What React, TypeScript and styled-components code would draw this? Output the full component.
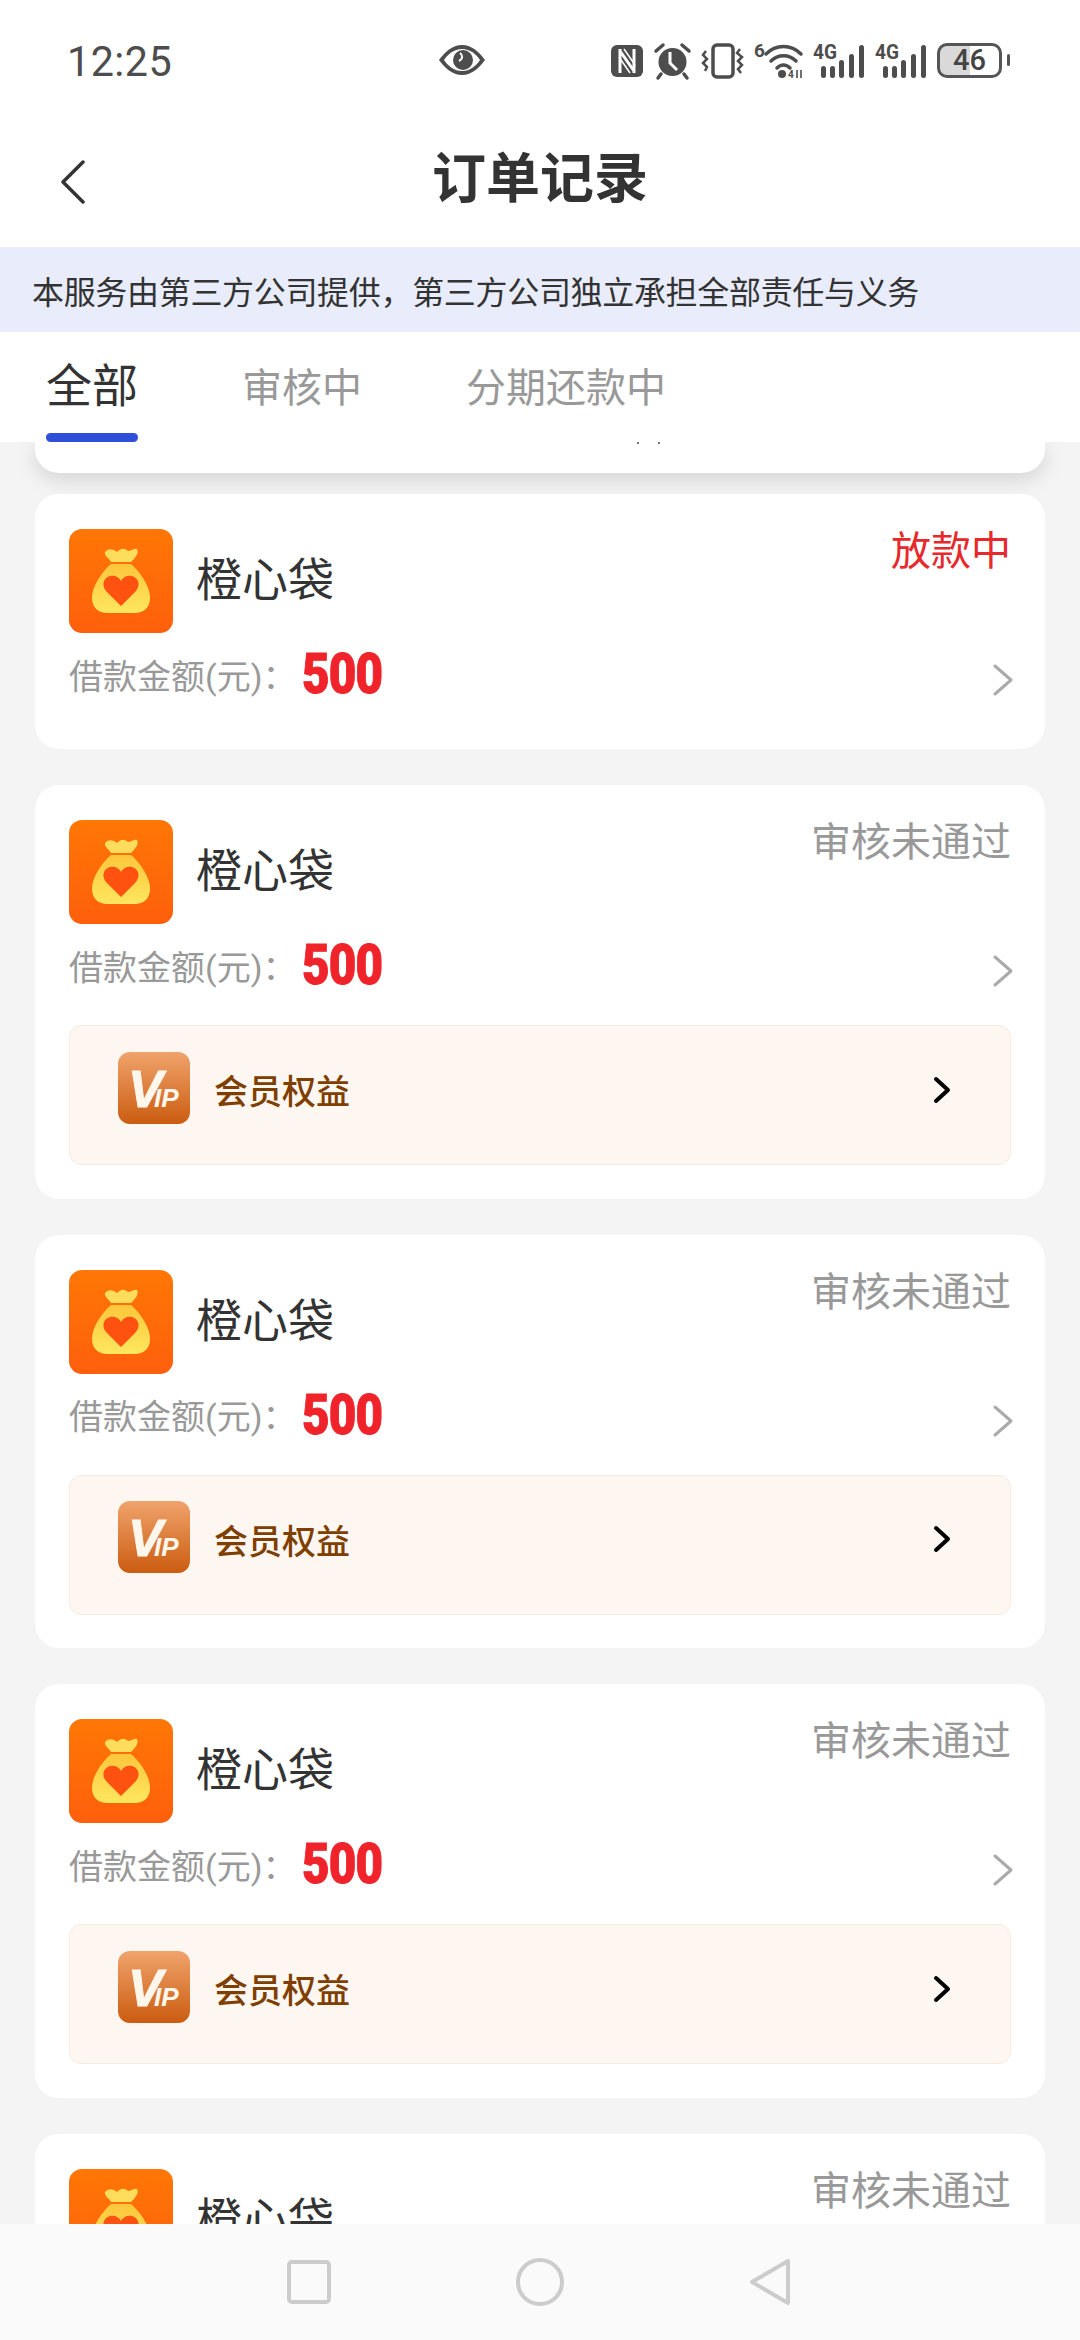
import React from "react";
import styled, { createGlobalStyle } from "styled-components";

const GlobalStyle = createGlobalStyle`
  html, body {
    margin: 0;
    padding: 0;
    background: #f4f4f4;
  }
  * {
    box-sizing: border-box;
  }
`;

const FONT = `Roboto, "Noto Sans CJK SC", sans-serif`;

const Page = styled.div`
  width: 1080px;
  height: 2340px;
  display: flex;
  flex-direction: column;
  overflow: hidden;
  background: #f4f4f4;
  font-family: ${FONT};
`;

/* status bar */
const StatusBar = styled.div`
  height: 120px;
  flex-shrink: 0;
  display: flex;
  align-items: flex-start;
  padding: 43px 0 0 67px;
  background: #fff;
  color: #4d4d4d;
`;

const Time = styled.div`
  width: 106px;
  font-size: 43px;
  line-height: 36px;
  letter-spacing: 0.5px;
  font-family: Roboto, sans-serif;
  transform: scaleX(0.96);
  transform-origin: left center;
`;

const EyeSlot = styled.div`
  margin-left: 266px;
  height: 34px;
  display: flex;
  align-items: center;
`;

const SysIcons = styled.div`
  margin-left: 126px;
  display: flex;
  align-items: flex-start;
`;

const SysIcon = styled.svg<{ $gap?: number }>`
  display: block;
  overflow: visible;
  margin-right: ${(p) => p.$gap ?? 10}px;
  flex-shrink: 0;
`;

const Battery = styled.div`
  position: relative;
  width: 65px;
  height: 35px;
  border: 3px solid #555;
  border-radius: 10px;
  overflow: hidden;
  display: flex;
  align-items: center;
  justify-content: center;
  font-family: Roboto, sans-serif;
  font-size: 29px;
  line-height: 29px;
  font-weight: 500;
  color: #444;
  background: linear-gradient(90deg, #d9d9d9 50%, #fff 50%);
`;

const BatteryNub = styled.div`
  width: 3px;
  height: 12px;
  margin: 11px 0 0 5px;
  background: #555;
  border-radius: 2px;
`;

/* header */
const Header = styled.div`
  height: 127px;
  flex-shrink: 0;
  position: relative;
  display: flex;
  align-items: center;
  justify-content: center;
  padding-bottom: 8px;
  background: #fff;
`;

const BackIcon = styled.svg`
  position: absolute;
  left: 60px;
  top: 40px;
`;

const Title = styled.h1`
  margin: 0;
  font-size: 54px;
  line-height: 60px;
  font-weight: 700;
  color: #333;
`;

const Notice = styled.div`
  height: 85px;
  flex-shrink: 0;
  display: flex;
  align-items: center;
  padding-left: 32px;
  background: #e9edfb;
  font-size: 32px;
  letter-spacing: -0.32px;
  color: #333;
`;

/* tabs */
const Tabs = styled.div`
  height: 110px;
  flex-shrink: 0;
  display: flex;
  padding-left: 46px;
  background: #fff;
`;

const Tab = styled.div<{ $active?: boolean }>`
  position: relative;
  margin-right: 104px;
  padding-top: ${(p) => (p.$active ? 24 : 31)}px;
  font-size: ${(p) => (p.$active ? 46 : 40)}px;
  line-height: ${(p) => (p.$active ? 60 : 52)}px;
  color: ${(p) => (p.$active ? "#333" : "#999")};
  ${(p) =>
    p.$active &&
    `
    &::after {
      content: "";
      position: absolute;
      left: 0;
      right: 0;
      bottom: 0;
      height: 9px;
      border-radius: 5px;
      background: #2f4fdb;
    }
  `}
`;

/* order list */
const List = styled.div`
  flex: 1;
  min-height: 0;
  overflow: hidden;
  display: flex;
  flex-direction: column;
  padding: 0 35px;
`;

const ClippedCard = styled.div`
  height: 31px;
  flex-shrink: 0;
  display: flex;
  gap: 19px;
  padding-left: 602px;
  margin-bottom: 21px;
  background: #fff;
  border-radius: 0 0 24px 24px;
  box-shadow: 0 6px 22px rgba(0, 0, 0, 0.14);
`;

const TinyDot = styled.span`
  width: 2px;
  height: 2px;
  background: #777;
`;

const Card = styled.div<{ $hasVip?: boolean }>`
  position: relative;
  flex-shrink: 0;
  height: ${(p) => (p.$hasVip ? 413.5 : 255)}px;
  margin-bottom: 36px;
  padding: 35px 34px 0;
  background: #fff;
  border-radius: 24px;
`;

const CardHead = styled.div`
  display: flex;
  align-items: flex-start;
`;

const ProductName = styled.div`
  margin-left: 23px;
  font-size: 46px;
  line-height: 102px;
  color: #333;
`;

const Status = styled.div<{ $alert?: boolean }>`
  margin-left: auto;
  margin-top: 2px;
  font-size: 40px;
  line-height: 42px;
  color: ${(p) => (p.$alert ? "#e8282b" : "#999")};
`;

const AmountRow = styled.div`
  height: 60px;
  margin-top: 14px;
  display: flex;
  align-items: center;
`;

const AmountLabel = styled.span`
  position: relative;
  top: -3px;
  width: 233px;
  font-size: 34px;
  color: #999;
`;

const AmountValue = styled.span`
  position: relative;
  top: -3px;
  width: 80px;
  font-size: 56px;
  line-height: 60px;
  font-weight: 900;
  font-family: Roboto, sans-serif;
  letter-spacing: -1px;
  color: #f0232b;
  -webkit-text-stroke: 1px #f0232b;
  transform: scaleX(0.85);
  transform-origin: left center;
  white-space: nowrap;
`;

const RowArrow = styled.svg`
  margin-left: auto;
  margin-right: -3px;
  position: relative;
  top: 3px;
`;

const VipBox = styled.div`
  height: 140px;
  margin-top: 27px;
  display: flex;
  align-items: center;
  padding: 0 44px 15px 48px;
  background: #fdf6f1;
  border: 1px solid #f8ebe0;
  border-radius: 12px;
`;

const VipText = styled.span`
  margin-left: 24px;
  font-size: 34px;
  font-weight: 500;
  color: #7f3f00;
  position: relative;
  top: 2px;
`;

const VipArrow = styled.svg`
  margin-left: auto;
  margin-right: 15px;
  position: relative;
  top: 2px;
`;

/* nav bar */
const NavBar = styled.div`
  height: 116px;
  flex-shrink: 0;
  display: flex;
  justify-content: center;
  align-items: flex-start;
  padding: 32px 2px 0 0;
  gap: 185px;
  background: #fafafa;
`;

const NavIcon = styled.svg<{ $top?: number }>`
  display: block;
  margin-top: ${(p) => p.$top ?? 0}px;
`;

const svgFont = "Roboto, sans-serif";

const Eye = () => (
  <svg width="46" height="30" viewBox="0 0 46 30">
    <path d="M23 0C33 0 40 7 46 15C40 23 33 30 23 30C13 30 6 23 0 15C6 7 13 0 23 0Z" fill="#4d4d4d" />
    <path d="M23 4C31 4 37 9 41 15C37 21 31 26 23 26C15 26 9 21 5 15C9 9 15 4 23 4Z" fill="#fff" />
    <circle cx="24" cy="15" r="10" fill="#4d4d4d" />
    <path d="M21 8C24 10 24 14 20 16" stroke="#fff" strokeWidth="2" fill="none" />
  </svg>
);

const Nfc = () => (
  <SysIcon width="32" height="32" viewBox="0 0 32 32" style={{ marginTop: 2 }} $gap={11}>
    <rect width="32" height="32" rx="6" fill="#4d4d4d" />
    <path d="M9 4V28M23 4V28M9 6L23 26" stroke="#fff" strokeWidth="3" fill="none" />
    <path d="M13 4L24 20M8 12L19 28" stroke="#fff" strokeWidth="1.5" fill="none" />
  </SysIcon>
);

const Alarm = () => (
  <SysIcon width="37" height="36" viewBox="0 0 37 36" $gap={11}>
    <circle cx="18.5" cy="19" r="14" fill="#4d4d4d" />
    <path d="M16 9V20L23 27" stroke="#fff" strokeWidth="3" fill="none" />
    <path d="M2 8L9 2M35 8L28 2M7 31L4 35M30 31L33 35" stroke="#4d4d4d" strokeWidth="3.5" strokeLinecap="round" fill="none" />
  </SysIcon>
);

const Vibrate = () => (
  <SysIcon width="42" height="36" viewBox="0 0 42 36" $gap={10}>
    <rect x="11" y="2" width="20" height="32" rx="4" fill="none" stroke="#4d4d4d" strokeWidth="3.5" />
    <path d="M4 8L1 12L5 16L1 20L5 24L3 28" fill="none" stroke="#4d4d4d" strokeWidth="2.5" />
    <path d="M38 6L35 10L40 14L36 18L40 22L36 26L39 30" fill="none" stroke="#4d4d4d" strokeWidth="2.5" />
  </SysIcon>
);

const Wifi = () => (
  <SysIcon width="50" height="36" viewBox="0 0 50 36" $gap={9}>
    <text x="0" y="14" fontSize="19" fontWeight="700" fontFamily={svgFont} fill="#4d4d4d">6</text>
    <path d="M12 11C22 1 37 1 47 11" fill="none" stroke="#4d4d4d" strokeWidth="3.5" strokeLinecap="round" />
    <path d="M17 18C24 11 35 11 42 18" fill="none" stroke="#4d4d4d" strokeWidth="3.5" strokeLinecap="round" />
    <path d="M23 25C27 21 32 21 36 25" fill="none" stroke="#4d4d4d" strokeWidth="3.5" strokeLinecap="round" />
    <circle cx="28" cy="31" r="4" fill="#4d4d4d" />
    <text x="34" y="35" fontSize="10" fontWeight="700" fontFamily={svgFont} fill="#4d4d4d">4</text>
    <path d="M43 27V35M47 35V27" stroke="#4d4d4d" strokeWidth="1.6" />
  </SysIcon>
);

const Signal = ({ gap }: { gap: number }) => (
  <SysIcon width="50" height="36" viewBox="0 0 50 36" $gap={gap}>
    <text x="0" y="16" fontSize="21" fontWeight="700" fontFamily={svgFont} fill="#4d4d4d" textLength="24" lengthAdjust="spacingAndGlyphs">4G</text>
    {[
      [8, 12],
      [17, 12],
      [26, 18],
      [36, 24],
      [46, 33],
    ].map(([x, h]) => (
      <rect key={x} x={x} y={35 - h} width="5" height={h} rx="2.5" fill="#4d4d4d" />
    ))}
  </SysIcon>
);

const MoneyBag = () => (
  <svg width="104" height="104" viewBox="0 0 104 104" style={{ flexShrink: 0, display: "block" }}>
    <defs>
      <linearGradient id="bagBg" x1="0" y1="0" x2="0" y2="1">
        <stop offset="0" stopColor="#ff7705" />
        <stop offset="1" stopColor="#ff5f0c" />
      </linearGradient>
      <linearGradient id="bagBody" x1="0" y1="0" x2="0" y2="1">
        <stop offset="0" stopColor="#fdc63b" />
        <stop offset="1" stopColor="#ffe75f" />
      </linearGradient>
    </defs>
    <rect width="104" height="104" rx="13" fill="url(#bagBg)" />
    <path d="M36 23C40 19 44 20 48 23C53 18 56 20 59 22C63 22 65 19 68 20C70 24 67 28 62 33H42C40 29 35 27 36 23Z" fill="#ffdd5c" />
    <path d="M42 35H62C68 40 81 55 81 69C81 79 74 84 66 84H38C30 84 23 79 23 69C23 55 36 40 42 35Z" fill="url(#bagBody)" />
    <path d="M52 77L38 63C32 57 34 49 41 47C46 46 50 48 52 52C54 48 58 46 63 47C70 49 72 57 66 63Z" fill="#ff5210" />
  </svg>
);

const VipLogo = () => (
  <svg width="72" height="72" viewBox="0 0 72 72" style={{ flexShrink: 0, display: "block" }}>
    <defs>
      <linearGradient id="vipBg" x1="0" y1="0" x2="0" y2="1">
        <stop offset="0" stopColor="#f0a36c" />
        <stop offset="1" stopColor="#cb5c10" />
      </linearGradient>
    </defs>
    <rect width="72" height="72" rx="12" fill="url(#vipBg)" />
    <text x="10" y="55" fontSize="52" fontWeight="700" fontStyle="italic" fontFamily={'"Liberation Sans", sans-serif'} fill="#fff6ec" stroke="#fff6ec" strokeWidth="1">V</text>
    <text x="36" y="55" fontSize="26" fontWeight="700" fontStyle="italic" fontFamily={'"Liberation Sans", sans-serif'} fill="#fff6ec">IP</text>
  </svg>
);

const Order = ({ status, alert, vip }: { status: string; alert?: boolean; vip?: boolean }) => (
  <Card $hasVip={vip}>
    <CardHead>
      <MoneyBag />
      <ProductName>橙心袋</ProductName>
      <Status $alert={alert}>{status}</Status>
    </CardHead>
    <AmountRow>
      <AmountLabel>借款金额(元)：</AmountLabel>
      <AmountValue>500</AmountValue>
      <RowArrow width="22" height="34" viewBox="0 0 22 34">
        <path d="M3 3L19 17L3 31" fill="none" stroke="#aaa" strokeWidth="3" strokeLinecap="round" strokeLinejoin="round" />
      </RowArrow>
    </AmountRow>
    {vip && (
      <VipBox>
        <VipLogo />
        <VipText>会员权益</VipText>
        <VipArrow width="18" height="28" viewBox="0 0 18 28">
          <path d="M3 3L15 14L3 25" fill="none" stroke="#000" strokeWidth="4" strokeLinecap="round" strokeLinejoin="round" />
        </VipArrow>
      </VipBox>
    )}
  </Card>
);

const App: React.FC = () => {
  return (
    <Page>
      <GlobalStyle />
      <StatusBar>
        <Time>12:25</Time>
        <EyeSlot>
          <Eye />
        </EyeSlot>
        <SysIcons>
          <Nfc />
          <Alarm />
          <Vibrate />
          <Wifi />
          <Signal gap={12} />
          <Signal gap={12} />
          <Battery>46</Battery>
          <BatteryNub />
        </SysIcons>
      </StatusBar>
      <Header>
        <BackIcon width="26" height="44" viewBox="0 0 26 44">
          <path d="M23 2L3 22L23 42" fill="none" stroke="#333" strokeWidth="3.5" strokeLinecap="round" strokeLinejoin="round" />
        </BackIcon>
        <Title>订单记录</Title>
      </Header>
      <Notice>本服务由第三方公司提供，第三方公司独立承担全部责任与义务</Notice>
      <Tabs>
        <Tab $active>全部</Tab>
        <Tab>审核中</Tab>
        <Tab>分期还款中</Tab>
      </Tabs>
      <List>
        <ClippedCard>
          <TinyDot />
          <TinyDot />
        </ClippedCard>
        <Order status="放款中" alert />
        <Order status="审核未通过" vip />
        <Order status="审核未通过" vip />
        <Order status="审核未通过" vip />
        <Order status="审核未通过" vip />
      </List>
      <NavBar>
        <NavIcon width="44" height="44" viewBox="0 0 44 44" $top={4}>
          <rect x="2" y="2" width="40" height="40" rx="3" fill="none" stroke="#ccc" strokeWidth="4" />
        </NavIcon>
        <NavIcon width="48" height="48" viewBox="0 0 48 48" $top={2}>
          <circle cx="24" cy="24" r="22" fill="none" stroke="#ccc" strokeWidth="4" />
        </NavIcon>
        <NavIcon width="42" height="48" viewBox="0 0 42 48" $top={2}>
          <path d="M39 3V45L3 24Z" fill="none" stroke="#ccc" strokeWidth="4" strokeLinejoin="round" />
        </NavIcon>
      </NavBar>
    </Page>
  );
};

export default App;
